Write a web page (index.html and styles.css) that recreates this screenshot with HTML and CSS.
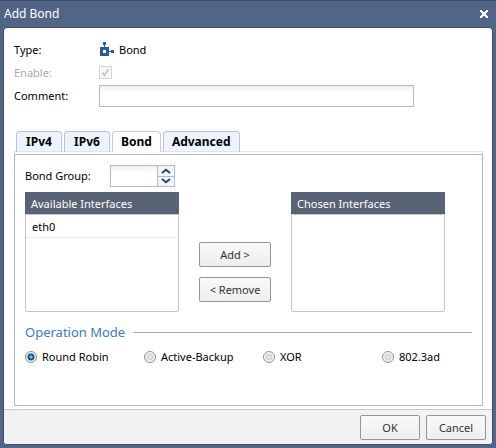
FILE: index.html
```html
<!DOCTYPE html>
<html lang="en">
<head>
  <meta charset="UTF-8" />
  <meta name="viewport" content="width=device-width, initial-scale=1.0" />
  <title>Add Bond</title>
  <link rel="stylesheet" href="styles.css">
</head>
<body>
  <form class="window">
    <header class="titlebar">
      <h1>Add Bond</h1>
      <button type="button" class="close" aria-label="Close">
        <svg width="8" height="8" viewBox="0 0 8 8" shape-rendering="crispEdges">
          <path d="M0 0h2v1h1v1h2V1h1V0h2v2H7v1H6v2h1v1h1v2H6V7H5V6H3v1H2v1H0V6h1V5h1V3H1V2H0z" fill="#fff"/>
        </svg>
      </button>
    </header>

    <div class="frame">
      <main>
        <div class="fields">
          <div class="field">
            <span class="label">Type:</span>
            <span class="type">
              <svg width="15" height="15" viewBox="0 0 15 15" shape-rendering="crispEdges">
                <path d="M4 0h3v3H6v2h4v4h2V8h3v3h-3v-1h-2v4H1V5h4V3H4z" fill="#2b5b95"/>
                <path d="M4 8h3v3H4z" fill="#fff"/>
              </svg>
              Bond
            </span>
          </div>
          <div class="field">
            <label class="label disabled" for="enable">Enable:</label>
            <input type="checkbox" id="enable" class="check" checked disabled>
          </div>
          <div class="field">
            <label class="label" for="comment">Comment:</label>
            <input type="text" id="comment" class="text">
          </div>
        </div>

        <div class="tabs" role="tablist">
          <button type="button" role="tab">IPv4</button>
          <button type="button" role="tab">IPv6</button>
          <button type="button" role="tab" class="active" aria-selected="true">Bond</button>
          <button type="button" role="tab">Advanced</button>
        </div>
        <div class="strip"></div>

        <div class="panel" role="tabpanel">
          <div class="group">
            <label for="group">Bond Group:</label>
            <div class="spinner">
              <input type="text" id="group">
              <div class="arrows">
                <button type="button" aria-label="Increase">
                  <svg width="10" height="6" viewBox="0 0 10 6"><path d="M1 5L5 1.8L9 5" fill="none" stroke="#27467f" stroke-width="2"/></svg>
                </button>
                <button type="button" aria-label="Decrease">
                  <svg width="10" height="6" viewBox="0 0 10 6"><path d="M1 1L5 4.2L9 1" fill="none" stroke="#27467f" stroke-width="2"/></svg>
                </button>
              </div>
            </div>
          </div>

          <div class="transfer">
            <section class="list">
              <h2>Available Interfaces</h2>
              <ul>
                <li>eth0</li>
              </ul>
            </section>
            <div class="moves">
              <button type="button" class="btn">Add &gt;</button>
              <button type="button" class="btn">&lt; Remove</button>
            </div>
            <section class="list">
              <h2>Chosen Interfaces</h2>
              <ul></ul>
            </section>
          </div>

          <fieldset class="modes">
            <legend>Operation Mode</legend>
            <div class="radios">
              <label><input type="radio" name="mode" checked>Round Robin</label>
              <label><input type="radio" name="mode">Active-Backup</label>
              <label><input type="radio" name="mode">XOR</label>
              <label><input type="radio" name="mode">802.3ad</label>
            </div>
          </fieldset>
        </div>
      </main>

      <footer>
        <button type="submit" class="btn">OK</button>
        <button type="button" class="btn">Cancel</button>
      </footer>
    </div>
  </form>
</body>
</html>
```
FILE: styles.css
```css
* {
  box-sizing: border-box;
}

body {
  margin: 0;
  font: 11px/16px 'Noto Sans', 'Open Sans', sans-serif;
  color: #000;
  background: #506587;
}

button, input {
  font: inherit;
  color: inherit;
  margin: 0;
  padding: 0;
}

h1, h2, ul {
  margin: 0;
  padding: 0;
  font-size: inherit;
  font-weight: normal;
}

svg {
  display: block;
}

.window {
  display: flex;
  flex-direction: column;
  min-height: 100vh;
  padding: 0 3px 3px;
  border-top: 1px solid #454d5c;
}

.titlebar {
  display: flex;
  align-items: center;
  justify-content: space-between;
  height: 26px;
  padding: 0 1px;
  color: #fff;
  font-size: 12px;
}

.close {
  padding: 4px;
  border: 0;
  background: none;
}

.frame {
  flex: 1;
  display: flex;
  flex-direction: column;
  border: 1px solid #414b5a;
  border-radius: 4px;
  background: #fff;
  overflow: hidden;
}

main {
  flex: 1;
  display: flex;
  flex-direction: column;
  padding: 10px 9px 3px 10px;
}

.fields {
  display: flex;
  flex-direction: column;
}

.field {
  display: flex;
  align-items: center;
  height: 23px;
}

.label {
  width: 85px;
}

.disabled {
  color: #aaa;
}

.type {
  display: flex;
  align-items: center;
  gap: 5px;
}

.check {
  appearance: none;
  width: 13px;
  height: 13px;
  border: 1px solid #d5d5d5;
  background: #f8f8f8 url("data:image/svg+xml,%3Csvg xmlns='http://www.w3.org/2000/svg' width='11' height='11'%3E%3Cpath d='M2.5 5.5L4.5 8.5L8.5 2' fill='none' stroke='%23c3c8df' stroke-width='2'/%3E%3C/svg%3E") no-repeat center;
}

.text {
  width: 315px;
  height: 22px;
  padding: 0 4px;
  border: 1px solid #b5b8c8;
  background: linear-gradient(#edf2f2, #fff 7px);
}

.tabs {
  display: flex;
  gap: 2px;
  margin-top: 24px;
  padding: 0 2px;
  z-index: 1;
}

.tabs button {
  min-width: 46px;
  height: 21px;
  padding: 0 8px;
  border: 1px solid #b9c3d6;
  border-bottom-color: #e3e3e3;
  border-radius: 4px 4px 0 0;
  background: #edf4fe;
  font-size: 12px;
  font-weight: bold;
}

.tabs .active {
  border-color: #ccc;
  border-bottom-color: #fff;
  background: #fff;
}

/* thin band between the tabs and the panel */
.strip {
  height: 3px;
  margin-top: -1px;
  border: 1px solid #e3e3e3;
  border-bottom: 0;
}

.panel {
  flex: 1;
  padding: 10px;
  border: 1px solid #b8b8b8;
}

.group {
  display: flex;
  align-items: center;
}

.group label {
  width: 85px;
}

.spinner {
  display: flex;
  width: 65px;
  height: 22px;
  border: 1px solid #b5b8c8;
}

.spinner input {
  flex: 1;
  min-width: 0;
  padding: 0 4px;
  border: 0;
  background: linear-gradient(#edf2f2, #fff 7px);
}

.arrows {
  display: flex;
  flex-direction: column;
  width: 17px;
  border-left: 1px solid #b5b8c8;
}

.arrows button {
  flex: 1;
  display: flex;
  align-items: center;
  justify-content: center;
  border: 0;
  background: #f3f4f6;
}

.arrows button + button {
  border-top: 1px solid #b5b8c8;
}

.transfer {
  display: flex;
  margin-top: 5px;
}

.list {
  display: flex;
  flex-direction: column;
  width: 154px;
  height: 120px;
}

.list h2 {
  height: 22px;
  padding: 0 6px;
  line-height: 24px;
  color: #fff;
  background: #586375;
}

.list ul {
  flex: 1;
  border: 1px solid #c6c6c6;
  border-radius: 0 0 2px 2px;
  list-style: none;
}

.list li {
  height: 23px;
  padding: 0 6px;
  line-height: 24px;
  border-bottom: 1px solid #ededed;
}

.moves {
  display: flex;
  flex-direction: column;
  gap: 10px;
  padding: 50px 20px 0;
}

.btn {
  width: 72px;
  height: 25px;
  border: 1px solid #92969c;
  border-radius: 2px;
  color: #333;
  background: linear-gradient(#f9f9f9, #eee);
}

.modes {
  min-width: 0;
  margin: 10px 0 0;
  padding: 0;
  border: 0;
}

.modes legend {
  display: flex;
  align-items: center;
  gap: 8px;
  width: 100%;
  padding: 0;
  color: #3d79c6;
  font-size: 13px;
  line-height: 20px;
}

.modes legend::after {
  content: '';
  flex: 1;
  border-top: 1px solid #aaa;
}

.radios {
  display: grid;
  grid-template-columns: repeat(3, 119px) 1fr;
  margin-top: 7px;
}

.radios label {
  display: flex;
  align-items: center;
  gap: 5px;
}

.radios input {
  appearance: none;
  width: 12px;
  height: 12px;
  border: 1px solid #8e8f8f;
  border-radius: 50%;
  background: radial-gradient(circle, #e6e6e6 1px, #d2d2d2 3px, #f6f6f6 4px);
}

.radios input:checked {
  border-color: #8e8f8f;
  background: radial-gradient(circle, #6cc4ea 1px, #1c6a9c 2px, #173f66 3px, #eef1f4 4px);
}

footer {
  display: flex;
  justify-content: flex-end;
  gap: 6px;
  padding: 5px 6px 4px;
  border-top: 1px solid #c8c8c8;
  background: #f2f2f2;
}

footer .btn {
  width: 60px;
}
```
